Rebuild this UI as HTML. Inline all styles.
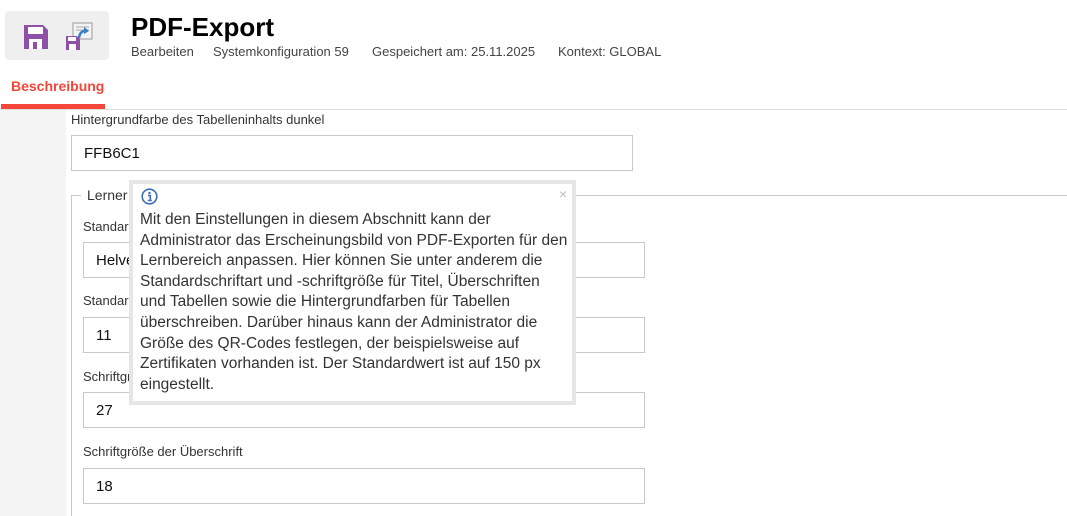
<!DOCTYPE html>
<html><head><meta charset="utf-8"><style>
body{margin:0;width:1067px;height:516px;overflow:hidden;background:#fff;font-family:"Liberation Sans",sans-serif;position:relative;color:#222}
.a{position:absolute}
.inp{position:absolute;border:1px solid #c8c8c8;box-sizing:border-box;font-size:15px;padding-left:12px;color:#111;display:flex;align-items:center}
.lbl{position:absolute;font-size:13px;color:#333}
</style></head><body>
<div class="a" style="left:5px;top:11px;width:104px;height:49px;background:#efefef;border-radius:4px"></div>
<svg class="a" style="left:24px;top:25px" width="24" height="24" viewBox="0 0 24 24"><path d="M0 0H19L24 5V24H0Z" fill="#8e4fa8"/><rect x="4" y="2" width="15" height="7" fill="#fff"/><rect x="5" y="14" width="13" height="10" fill="#fff"/><rect x="9" y="17" width="4" height="7" fill="#8e4fa8"/></svg>
<svg class="a" style="left:64px;top:22px" width="30" height="29" viewBox="0 0 30 29"><rect x="9" y="1" width="19" height="16" fill="#f3f3f3" stroke="#999"/><path d="M12 5h13M12 8h13" stroke="#aaa"/><path d="M15 16 Q16 8 23 9" stroke="#3b7fc4" stroke-width="2.5" fill="none"/><path d="M20 5l5 4-5 3z" fill="#3b7fc4"/><path d="M2 14H13L16 17V28H2Z" fill="#8e4fa8"/><rect x="4" y="15" width="8" height="4" fill="#fff"/><rect x="5" y="22" width="7" height="6" fill="#fff"/></svg>
<div class="a" style="left:131px;top:12px;font-size:26px;font-weight:bold;color:#000">PDF-Export</div>
<div class="a" style="left:131px;top:44px;font-size:13px;color:#444"><span>Bearbeiten</span><span class="a" style="left:82px;white-space:nowrap">Systemkonfiguration 59</span><span class="a" style="left:241px;white-space:nowrap">Gespeichert am: 25.11.2025</span><span class="a" style="left:427px;white-space:nowrap">Kontext: GLOBAL</span></div>
<div class="a" style="left:11px;top:78px;font-size:14px;font-weight:bold;color:#f4473a">Beschreibung</div>
<div class="a" style="left:1px;top:104px;width:104px;height:5px;background:#f4473a"></div>
<div class="a" style="left:0;top:109px;width:1067px;height:1px;background:#ddd"></div>
<div class="a" style="left:0;top:110px;width:66px;height:406px;background:#f4f4f4"></div>
<div class="lbl" style="left:71px;top:112px">Hintergrundfarbe des Tabelleninhalts dunkel</div>
<div class="inp" style="left:71px;top:135px;width:562px;height:36px">FFB6C1</div>
<div class="a" style="left:71px;top:195px;width:1px;height:321px;background:#c8c8c8"></div>
<div class="a" style="left:71px;top:195px;width:10px;height:1px;background:#c8c8c8"></div>
<div class="a" style="left:130px;top:195px;width:937px;height:1px;background:#c8c8c8"></div>
<div class="a" style="left:87px;top:187px;font-size:14px;color:#333">Lerner</div>
<div class="lbl" style="left:83px;top:219px">Standardschriftart</div>
<div class="inp" style="left:83px;top:242px;width:562px;height:36px">Helvetica</div>
<div class="lbl" style="left:83px;top:293px">Standardschriftgröße</div>
<div class="inp" style="left:83px;top:317px;width:562px;height:36px">11</div>
<div class="lbl" style="left:83px;top:369px">Schriftgröße des Titels</div>
<div class="inp" style="left:83px;top:392px;width:562px;height:36px">27</div>
<div class="lbl" style="left:83px;top:444px">Schriftgröße der Überschrift</div>
<div class="inp" style="left:83px;top:468px;width:562px;height:36px">18</div>
<div class="a" style="left:129px;top:180px;width:447px;height:225px;box-sizing:border-box;border:4px solid #e6e6e6;background:#fff"></div>
<svg class="a" style="left:141px;top:188px" width="17" height="17" viewBox="0 0 17 17"><circle cx="8.5" cy="8.5" r="7.3" fill="none" stroke="#3b6fb5" stroke-width="1.6"/><circle cx="8.5" cy="5" r="1.2" fill="#3b6fb5"/><path d="M7 7.5h2.3v5M6.8 12.5h4" stroke="#3b6fb5" stroke-width="1.6" fill="none"/></svg>
<div class="a" style="left:559px;top:186px;font-size:14px;color:#bbb">×</div>
<div class="a" style="left:140px;top:210px;width:428px;font-size:15.5px;line-height:20.6px;color:#333">Mit den Einstellungen in diesem Abschnitt kann der Administrator das Erscheinungsbild von PDF-Exporten für den Lernbereich anpassen. Hier können Sie unter anderem die Standardschriftart und -schriftgröße für Titel, Überschriften und Tabellen sowie die Hintergrundfarben für Tabellen überschreiben. Darüber hinaus kann der Administrator die Größe des QR-Codes festlegen, der beispielsweise auf Zertifikaten vorhanden ist. Der Standardwert ist auf 150 px eingestellt.</div>
</body></html>
